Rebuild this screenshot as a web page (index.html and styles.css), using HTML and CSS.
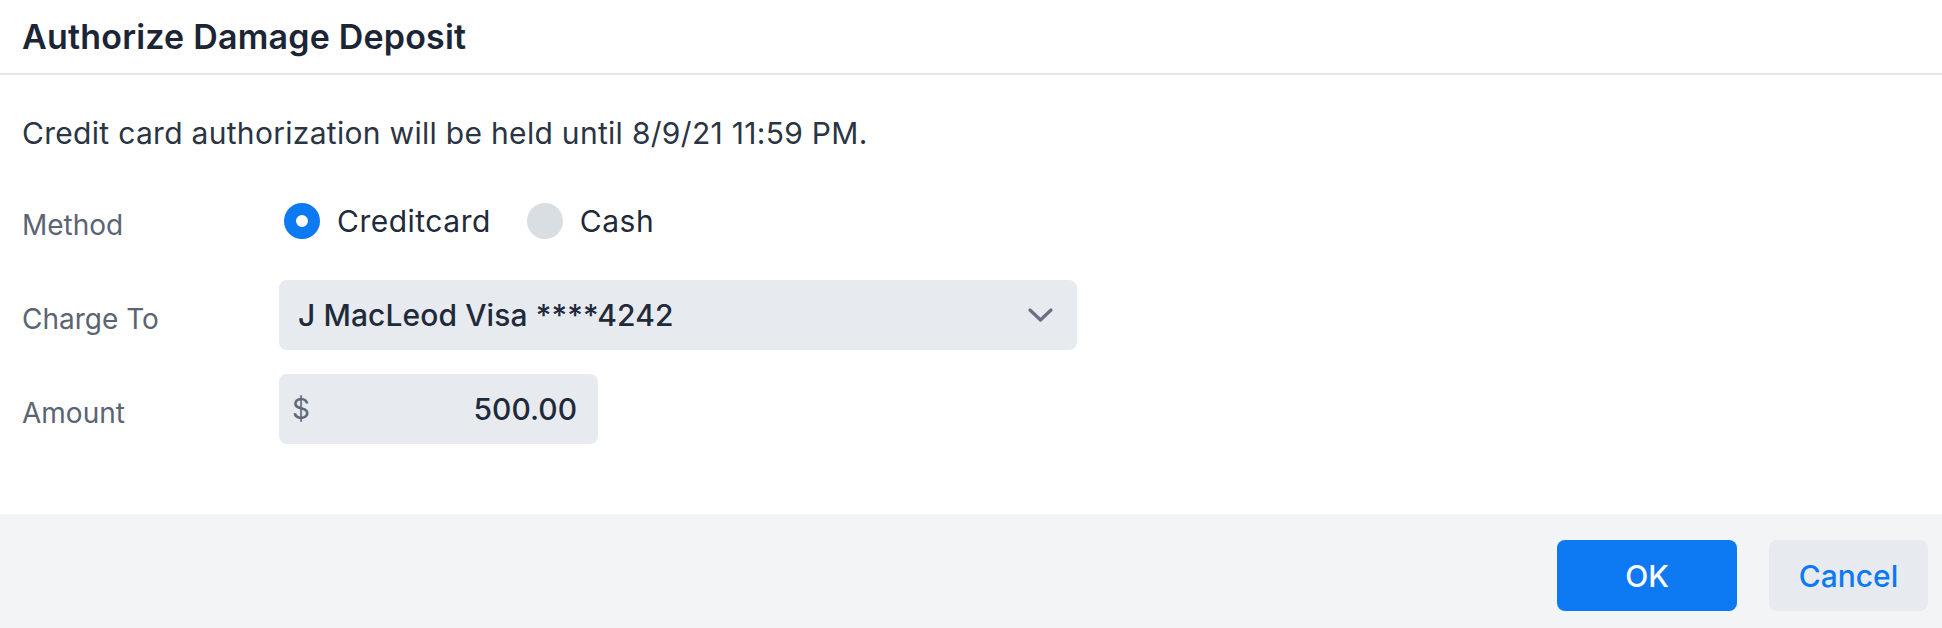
FILE: index.html
```html
<!DOCTYPE html>
<html>
<head>
<meta charset="utf-8">
<link rel="stylesheet" href="styles.css">
</head>
<body>
<div class="dialog">
  <div class="header"><h1 class="title">Authorize Damage Deposit</h1></div>
  <div class="content">
    <p class="note">Credit card authorization will be held until 8/9/21 11:59 PM.</p>
    <div class="form">
      <div class="label">Method</div>
      <div class="radios">
        <label class="radio"><span class="dot checked"></span><span class="rtext">Creditcard</span></label>
        <label class="radio"><span class="dot"></span><span class="rtext">Cash</span></label>
      </div>
      <div class="label">Charge To</div>
      <div class="select">
        <span class="select-text">J MacLeod Visa ****4242</span>
        <svg class="chev" width="25" height="14" viewBox="0 0 25 14"><path d="M2 2 L12.5 12 L23 2" fill="none" stroke="#687283" stroke-width="3.2" stroke-linecap="round" stroke-linejoin="round"/></svg>
      </div>
      <div class="label">Amount</div>
      <div class="amount"><span class="cur">$</span><span class="val">500.00</span></div>
    </div>
  </div>
  <div class="footer">
    <button class="btn ok">OK</button>
    <button class="btn cancel">Cancel</button>
  </div>
</div>
</body>
</html>
```
FILE: styles.css
```css
html, body { margin: 0; padding: 0; background: #ffffff; }
body { font-family: Inter, "Noto Sans", sans-serif; color: #1f2937; width: 1942px; height: 628px; overflow: hidden; }
.dialog { display: flex; flex-direction: column; height: 628px; }
.header { height: 73px; border-bottom: 2px solid #e3e6ea; display: flex; align-items: center; padding-left: 22px; }
.title { margin: 0; font-size: 34px; font-weight: 600; color: #1b2536; letter-spacing: 0.2px; }
.content { padding: 38px 22px 0 22px; height: 439px; box-sizing: border-box; }
.note { margin: 0; font-size: 30px; line-height: 40px; color: #2a3443; letter-spacing: 0.3px; }
.form { margin-top: 33px; display: grid; grid-template-columns: 257px auto; grid-auto-rows: 70px; row-gap: 24px; align-items: center; justify-items: start; }
.label { font-size: 28px; color: #5b6473; padding-top: 8px; }
.radios { display: flex; align-items: center; gap: 0; padding-left: 5px; }
.radio { display: flex; align-items: center; margin-right: 36px; }
.dot { width: 36px; height: 36px; border-radius: 50%; background: #d9dee3; box-sizing: border-box; }
.dot.checked { border: 12px solid #0d79f2; background-color: #ffffff; }
.rtext { font-size: 30px; color: #1f2a3a; margin-left: 17px; letter-spacing: 0.5px; }
.select { width: 798px; height: 70px; background: #e7eaee; border-radius: 8px; display: flex; align-items: center; justify-content: space-between; padding: 0 24px 0 19px; box-sizing: border-box; }
.select-text { font-size: 30px; font-weight: 500; color: #1f2a3a; letter-spacing: 0.1px; }
.chev { display: block; }
.amount { width: 319px; height: 70px; background: #e7eaee; border-radius: 8px; display: flex; align-items: center; justify-content: space-between; padding: 0 21px 0 13px; box-sizing: border-box; }
.cur { font-size: 28px; color: #5f6878; }
.val { font-size: 30px; font-weight: 500; color: #1f2a3a; }
.footer { flex: 1; background: #f3f4f6; display: flex; justify-content: flex-end; align-items: flex-start; padding: 26px 14px 0 0; gap: 32px; }
.btn { height: 71px; border: none; border-radius: 8px; font-family: Inter, "Noto Sans", sans-serif; font-size: 30px; font-weight: 500; padding: 0; }
.ok { width: 180px; background: #0d79f2; color: #ffffff; }
.cancel { width: 159px; background: #e7eaee; color: #0d79f2; }
```
